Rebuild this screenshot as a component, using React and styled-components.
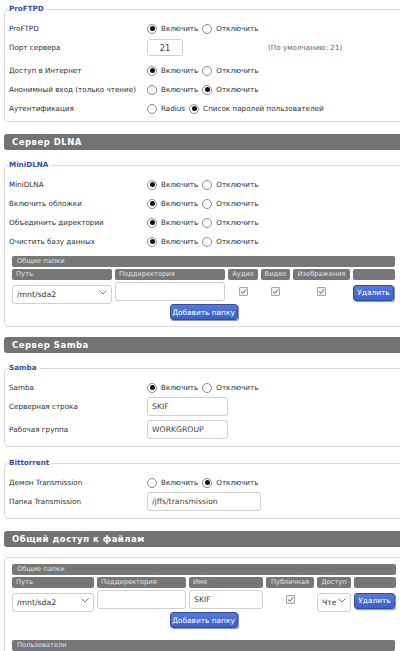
import React from 'react';
import styled, { createGlobalStyle } from 'styled-components';

const GlobalStyle = createGlobalStyle`
  html, body {
    margin: 0;
    padding: 0;
    background: #fff;
    overflow: hidden;
  }
  body {
    font-family: "DejaVu Sans", Verdana, sans-serif;
    color: #333;
  }
`;

const Page = styled.div`
  width: 406px;
  padding: 4px 0 0 4px;
`;

const SectionTitle = styled.div`
  height: 16px;
  margin: 0 0 10px;
  padding-left: 8px;
  background: #737373;
  border-radius: 3px;
  color: #fff;
  font-size: 8.5px;
  font-weight: bold;
  letter-spacing: 0.5px;
  line-height: 16px;
`;

const Group = styled.fieldset`
  margin: 0 0 ${p => p.$gap ?? 11}px;
  padding: ${p => p.$top ?? 5}px 4px ${p => p.$bottom ?? 3}px;
  border: 1px solid #d9d9d9;
  border-radius: 4px;
  min-width: 0;
`;

const Legend = styled.legend`
  padding: 0 3px 0 0;
  color: #2f51a8;
  font-size: 7.2px;
  font-weight: bold;
  line-height: 10px;
`;

const Row = styled.div`
  display: flex;
  align-items: center;
  height: 19px;
  margin-bottom: ${p => (p.$field ? 4 : 0)}px;
  font-size: 7.2px;
  color: #2e2e2e;
`;

const Label = styled.div`
  width: 138px;
  flex-shrink: 0;
`;

const Options = styled.div`
  display: flex;
  align-items: center;
  gap: 4px;
`;

const Option = styled.label`
  display: inline-flex;
  align-items: center;
  gap: 4px;
`;

const Dot = styled.span`
  display: inline-flex;
  align-items: center;
  justify-content: center;
  box-sizing: border-box;
  width: 10px;
  height: 10px;
  border: 1px solid #8c8c8c;
  border-radius: 50%;
  background: #fff;

  &::after {
    content: '';
    width: 5px;
    height: 5px;
    border-radius: 50%;
    background: ${p => (p.$on ? '#111' : 'transparent')};
  }
`;

const Hint = styled.span`
  margin-left: 85px;
  color: #666;
`;

const Field = styled.input`
  box-sizing: border-box;
  width: ${p => p.$w}px;
  height: ${p => p.$h ?? 19}px;
  margin: 0;
  padding: 0 4px;
  border: 1px solid #cfcfcf;
  border-radius: 3px;
  background: #fff;
  color: #444;
  font: ${p => p.$size ?? 7.7}px "DejaVu Sans", Verdana, sans-serif;
  text-align: ${p => (p.$center ? 'center' : 'left')};
  outline: none;
`;

const Table = styled.div`
  display: grid;
  grid-template-columns: ${p => p.$cols};
  column-gap: 3px;
  row-gap: 2px;
  width: 383px;
  margin: ${p => p.$top ?? 0}px 0 0 3px;
`;

const Caption = styled.div`
  grid-column: 1 / -1;
  height: 11px;
  padding-left: 5px;
  background: #777;
  border-radius: 2px;
  color: #e2e2e2;
  font-size: 6.7px;
  line-height: 11px;
`;

const UsersBar = styled(Caption)`
  width: 378px;
  margin: 12px 0 0 3px;
`;

const HeadCell = styled.div`
  height: 11px;
  padding: 0 ${p => (p.$center ? 0 : 4)}px;
  background: #777;
  border-radius: 2px;
  color: #e2e2e2;
  font-size: 6.7px;
  line-height: 11px;
  text-align: ${p => (p.$center ? 'center' : 'left')};
  white-space: nowrap;
  overflow: hidden;
`;

const Cell = styled.div`
  display: flex;
  align-items: center;
  justify-content: ${p => (p.$center ? 'center' : 'flex-start')};
  height: 19px;
  min-width: 0;
`;

const SelectWrap = styled.div`
  position: relative;
  width: 100%;
  height: 19px;
`;

const Select = styled.select`
  appearance: none;
  box-sizing: border-box;
  width: 100%;
  height: 100%;
  margin: 0;
  padding: 0 ${p => p.$pad ?? 18}px 0 4px;
  border: 1px solid #cfcfcf;
  border-radius: 3px;
  background: #fff;
  color: #333;
  font: 7.7px "DejaVu Sans", Verdana, sans-serif;
  outline: none;
`;

const Chevron = styled.svg`
  position: absolute;
  right: 5px;
  top: 8px;
  pointer-events: none;
`;

const Check = styled.span`
  display: inline-flex;
  align-items: center;
  justify-content: center;
  box-sizing: border-box;
  width: 9px;
  height: 9px;
  border: 1px solid #a6a6a6;
  border-radius: 1px;
  background: #f1f1f1;
`;

const Button = styled.button`
  box-sizing: border-box;
  width: ${p => p.$w}px;
  height: 16px;
  margin: ${p => (p.$low ? '2px 0 0' : 0)};
  padding: 0;
  border: 1px solid #2d4fa6;
  border-radius: 3px;
  background: linear-gradient(#5679d9, #3c62c8);
  box-shadow: 1px 1px 1px rgba(0, 0, 0, 0.45);
  color: #fff;
  font: 7.4px "DejaVu Sans", Verdana, sans-serif;
  white-space: nowrap;
`;

const AddRow = styled.div`
  display: flex;
  justify-content: center;
  width: 383px;
  margin: 3px 0 0 3px;
`;

const Radio = ({ off, left = 'Включить', right = 'Отключить' }) => (
  <Options>
    <Option><Dot $on={!off} />{left}</Option>
    <Option><Dot $on={off} />{right}</Option>
  </Options>
);

const Picker = ({ value, pad }) => (
  <SelectWrap>
    <Select value={value} $pad={pad} onChange={() => {}}>
      <option>{value}</option>
    </Select>
    <Chevron width="8" height="5" viewBox="0 0 8 5">
      <polyline points="0.5,0.5 4,4 7.5,0.5" fill="none" stroke="#777" strokeWidth="1" />
    </Chevron>
  </SelectWrap>
);

const Box = () => (
  <Check>
    <svg width="7" height="7" viewBox="0 0 7 7">
      <polyline points="1,3.6 2.9,5.4 6,1.4" fill="none" stroke="#666" strokeWidth="1" />
    </svg>
  </Check>
);

const App = () => (
  <Page>
    <GlobalStyle />

    <Group $gap={12}>
      <Legend>ProFTPD</Legend>
      <Row><Label>ProFTPD</Label><Radio /></Row>
      <Row $field>
        <Label>Порт сервера</Label>
        <Field $w={36} $h={17} $center $size={8.2} value="21" readOnly />
        <Hint>(По умолчанию: 21)</Hint>
      </Row>
      <Row><Label>Доступ в Интернет</Label><Radio /></Row>
      <Row><Label>Анонимный вход (только чтение)</Label><Radio off /></Row>
      <Row><Label>Аутентификация</Label><Radio off left="Radius" right="Список паролей пользователей" /></Row>
    </Group>

    <SectionTitle>Сервер DLNA</SectionTitle>
    <Group $gap={10} $bottom={6}>
      <Legend>MiniDLNA</Legend>
      <Row><Label>MiniDLNA</Label><Radio /></Row>
      <Row><Label>Включить обложки</Label><Radio /></Row>
      <Row><Label>Объединить директории</Label><Radio /></Row>
      <Row><Label>Очистить базу данных</Label><Radio /></Row>
      <Table $cols="100px 110px 30px 29px 57px 42px" $top={5}>
        <Caption>Общие папки</Caption>
        <HeadCell>Путь</HeadCell>
        <HeadCell>Поддиректория</HeadCell>
        <HeadCell $center>Аудио</HeadCell>
        <HeadCell $center>Видео</HeadCell>
        <HeadCell $center>Изображения</HeadCell>
        <HeadCell />
        <Cell><Picker value="/mnt/sda2" /></Cell>
        <Cell><Field $w={110} value="" readOnly /></Cell>
        <Cell $center><Box /></Cell>
        <Cell $center><Box /></Cell>
        <Cell $center><Box /></Cell>
        <Cell><Button $w={41} $low>Удалить</Button></Cell>
      </Table>
      <AddRow><Button $w={68}>Добавить папку</Button></AddRow>
    </Group>

    <SectionTitle>Сервер Samba</SectionTitle>
    <Group $gap={11}>
      <Legend>Samba</Legend>
      <Row><Label>Samba</Label><Radio /></Row>
      <Row $field><Label>Серверная строка</Label><Field $w={81} value="SKIF" readOnly /></Row>
      <Row $field><Label>Рабочая группа</Label><Field $w={81} value="WORKGROUP" readOnly /></Row>
    </Group>

    <Group $gap={12}>
      <Legend>Bittorrent</Legend>
      <Row><Label>Демон Transmission</Label><Radio off /></Row>
      <Row $field><Label>Папка Transmission</Label><Field $w={114} value="/jffs/transmission" readOnly /></Row>
    </Group>

    <SectionTitle>Общий доступ к файлам</SectionTitle>
    <Group $top={6} $bottom={10}>
      <Table $cols="82px 89px 74px 48px 34px 42px">
        <Caption>Общие папки</Caption>
        <HeadCell>Путь</HeadCell>
        <HeadCell>Поддиректория</HeadCell>
        <HeadCell>Имя</HeadCell>
        <HeadCell $center>Публичная</HeadCell>
        <HeadCell $center>Доступ</HeadCell>
        <HeadCell />
        <Cell><Picker value="/mnt/sda2" /></Cell>
        <Cell><Field $w={89} value="" readOnly /></Cell>
        <Cell><Field $w={74} value="SKIF" readOnly /></Cell>
        <Cell $center><Box /></Cell>
        <Cell><Picker value="Чтение" pad={14} /></Cell>
        <Cell><Button $w={41} $low>Удалить</Button></Cell>
      </Table>
      <AddRow><Button $w={68}>Добавить папку</Button></AddRow>
      <UsersBar>Пользователи</UsersBar>
    </Group>
  </Page>
);

export default App;
